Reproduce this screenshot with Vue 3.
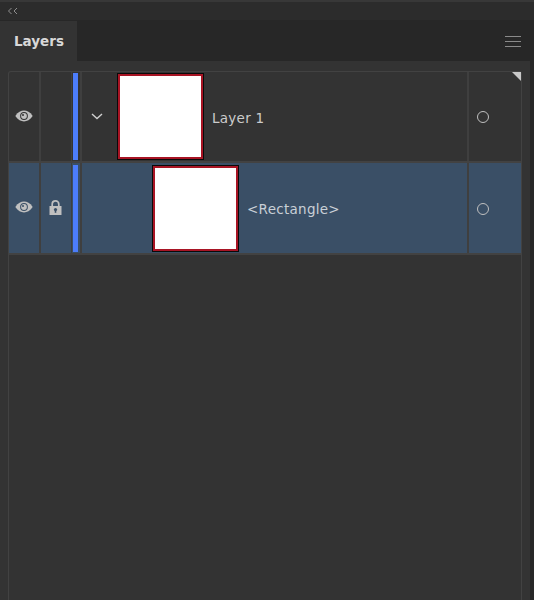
<script setup>
const rows = [
  { id: 1, name: 'Layer 1', selected: false, locked: false, chevron: true },
  { id: 2, name: '<Rectangle>', selected: true, locked: true, chevron: false }
]
</script>

<template>
  <div class="app">
    <div class="topbar">
      <svg class="collapse" width="12" height="8" viewBox="0 0 12 8" fill="none" stroke="#8f8f8f" stroke-width="1">
        <path d="M4.5 1 L1.5 4 L4.5 7" />
        <path d="M10 1 L7 4 L10 7" />
      </svg>
    </div>
    <div class="tabbar">
      <div class="tab">Layers</div>
      <div class="menu"><span></span><span></span><span></span></div>
    </div>
    <div class="panel">
      <div class="list">
        <div class="corner"></div>
        <div v-for="row in rows" :key="row.id" class="row" :class="{ selected: row.selected, child: !row.chevron }">
          <div class="cell eye">
            <svg width="18" height="12" viewBox="0 0 18 12">
              <path d="M0.3 6 C3 2 6 0.6 9 0.6 C12 0.6 15 2 17.7 6 C15 10 12 11.4 9 11.4 C6 11.4 3 10 0.3 6 Z" fill="#c0c0c0" />
              <circle cx="9" cy="6" r="3.9" :fill="row.selected ? '#3a4f66' : '#333333'" />
              <circle cx="9" cy="6" r="2.9" fill="#c0c0c0" />
              <circle cx="8" cy="5" r="1" :fill="row.selected ? '#3a4f66' : '#333333'" />
            </svg>
          </div>
          <div class="cell lock">
            <svg v-if="row.locked" width="13" height="15" viewBox="0 0 13 15">
              <path d="M3.2 6.5 V4.2 C3.2 2.2 4.6 0.9 6.5 0.9 C8.4 0.9 9.8 2.2 9.8 4.2 V6.5" fill="none" stroke="#c0c0c0" stroke-width="1.7" />
              <path d="M0.5 6 H12.5 V15 H0.5 Z" fill="#c0c0c0" />
              <circle cx="6.5" cy="9.5" r="1.6" fill="#3a4f66" />
              <path d="M5.7 10 H7.3 V12.8 H5.7 Z" fill="#3a4f66" />
            </svg>
          </div>
          <div class="color-cell"><div class="color-bar"></div></div>
          <div class="content">
            <svg v-if="row.chevron" class="chevron" width="12" height="7" viewBox="0 0 12 7" fill="none" stroke="#d0d0d0" stroke-width="1.4">
              <path d="M1 1 L6 5.5 L11 1" />
            </svg>
            <div class="thumb"><div class="thumb-inner"></div></div>
            <span class="name">{{ row.name }}</span>
          </div>
          <div class="cell target"><div class="ring"></div></div>
        </div>
      </div>
    </div>
    <div class="edge"></div>
  </div>
</template>

<style scoped>
.app {
  position: relative;
  width: 534px;
  height: 600px;
  overflow: hidden;
  display: flex;
  flex-direction: column;
  background: #333333;
  font-family: "DejaVu Sans", sans-serif;
  color: #d2d2d2;
}
.topbar {
  height: 21px;
  box-sizing: border-box;
  flex: none;
  display: flex;
  align-items: center;
  padding-left: 7px;
  background: #2c2c2c;
  border-top: 2px solid #383838;
  border-bottom: 1px solid #272727;
}
.collapse { display: block; }
.tabbar {
  height: 40px;
  flex: none;
  display: flex;
  justify-content: space-between;
  align-items: center;
  background: #272727;
}
.tab {
  width: 77px;
  height: 40px;
  box-sizing: border-box;
  padding-left: 14px;
  line-height: 41px;
  background: #333333;
  font-size: 13.5px;
  font-weight: 700;
  color: #d8d8d8;
}
.menu {
  display: flex;
  flex-direction: column;
  gap: 3.5px;
  margin-right: 13px;
  width: 16px;
  margin-top: 1px;
}
.menu span { display: block; height: 1.5px; background: #8a8a8a; }
.panel {
  flex: 1;
  padding: 10px 12px 0 8px;
  display: flex;
  min-height: 0;
}
.list {
  position: relative;
  flex: 1;
  border-left: 1px solid #424242;
  border-right: 1px solid #424242;
  border-top: 1px solid #424242;
  border-radius: 3px 3px 0 0;
}
.corner {
  position: absolute;
  top: 0;
  right: 0;
  width: 0;
  height: 0;
  border-top: 9px solid #c8c8c8;
  border-left: 9px solid transparent;
  z-index: 1;
}
.row {
  height: 92px;
  box-sizing: border-box;
  display: flex;
  border-bottom: 2px solid #424242;
}
.row:not(.child) { height: 91px; }
.row.selected { background: #3a4f66; }
.cell {
  display: flex;
  align-items: center;
  justify-content: center;
  flex: none;
  height: 100%;
  box-sizing: border-box;
}
.eye { width: 32px; border-right: 2px solid #3f3f3f; padding-right: 1px; padding-bottom: 2px; }
.lock { width: 31px; border-right: 1px solid #3f3f3f; padding-bottom: 1px; padding-right: 2px; }
.color-cell {
  width: 10px;
  flex: none;
  box-sizing: border-box;
  border-right: 2px solid #3f3f3f;
  padding: 1px 0 1px 1px;
  display: flex;
}
.child .color-cell { padding: 2px 0 1px 1px; }
.color-bar { width: 5px; background: #4c7dfb; }
.content {
  flex: 1;
  min-width: 0;
  display: flex;
  align-items: center;
  border-right: 2px solid #3f3f3f;
  padding-left: 9px;
}
.chevron { flex: none; margin-right: 14px; margin-top: -1px; }
.child .content { padding-left: 70px; }
.thumb {
  width: 87px;
  height: 87px;
  flex: none;
  box-sizing: border-box;
  border: 1px solid #0a0a0a;
  background: #fff;
}
.child .thumb { margin-top: 1px; }
.thumb-inner {
  width: 100%;
  height: 100%;
  box-sizing: border-box;
  border: 2px solid #a81424;
}
.name {
  margin-left: 8px;
  font-size: 13.5px;
  letter-spacing: 0.28px;
  color: #cccccc;
  margin-top: 2px;
}
.selected .name { color: #c9d0d7; margin-top: 1px; }
.target {
  width: 52px;
  justify-content: flex-start;
  padding-left: 8px;
  padding-top: 1px;
}
.ring {
  width: 12px;
  height: 12px;
  box-sizing: border-box;
  border: 1.4px solid #c0c0c0;
  border-radius: 50%;
}
.edge {
  position: absolute;
  top: 21px;
  right: 0;
  bottom: 0;
  width: 4px;
  background: #272727;
}
</style>
